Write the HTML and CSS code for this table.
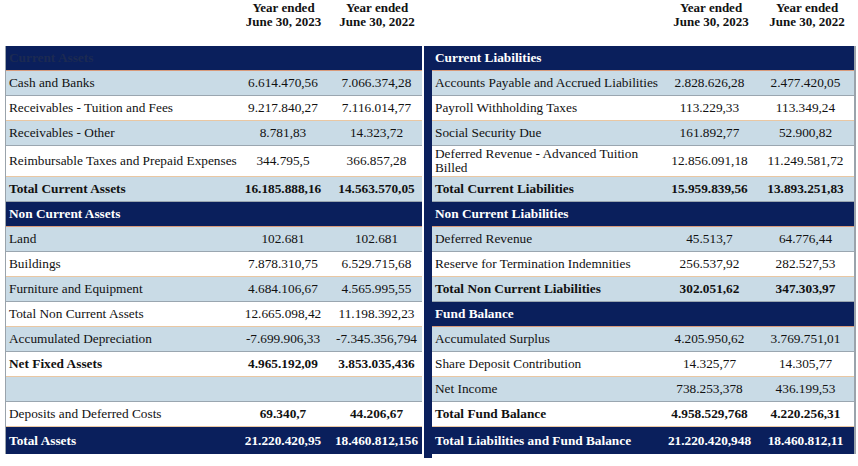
FILE: index.html
```html
<!DOCTYPE html>
<html>
<head>
<meta charset="utf-8">
<link rel="stylesheet" href="styles.css">
</head>
<body>
<div class="page">
  <section class="panel left">
    <div class="head">
      <div></div>
      <div class="yh">Year ended<br>June 30, 2023</div>
      <div class="yh">Year ended<br>June 30, 2022</div>
    </div>
    <div class="tbl">
      <div class="row navy dim"><span class="lbl b">Current Assets</span><span></span><span></span></div>
      <div class="row blue"><span class="lbl">Cash and Banks</span><span>6.614.470,56</span><span>7.066.374,28</span></div>
      <div class="row white"><span class="lbl">Receivables - Tuition and Fees</span><span>9.217.840,27</span><span>7.116.014,77</span></div>
      <div class="row blue"><span class="lbl">Receivables - Other</span><span>8.781,83</span><span>14.323,72</span></div>
      <div class="row white tall"><span class="lbl">Reimbursable Taxes and Prepaid Expenses</span><span>344.795,5</span><span>366.857,28</span></div>
      <div class="row blue b"><span class="lbl">Total Current Assets</span><span>16.185.888,16</span><span>14.563.570,05</span></div>
      <div class="row navy b"><span class="lbl">Non Current Assets</span><span></span><span></span></div>
      <div class="row blue"><span class="lbl">Land</span><span>102.681</span><span>102.681</span></div>
      <div class="row white"><span class="lbl">Buildings</span><span>7.878.310,75</span><span>6.529.715,68</span></div>
      <div class="row blue"><span class="lbl">Furniture and Equipment</span><span>4.684.106,67</span><span>4.565.995,55</span></div>
      <div class="row white"><span class="lbl">Total Non Current Assets</span><span>12.665.098,42</span><span>11.198.392,23</span></div>
      <div class="row blue"><span class="lbl">Accumulated Depreciation</span><span>-7.699.906,33</span><span>-7.345.356,794</span></div>
      <div class="row white b"><span class="lbl">Net Fixed Assets</span><span>4.965.192,09</span><span>3.853.035,436</span></div>
      <div class="row blue"><span class="lbl"></span><span></span><span></span></div>
      <div class="row white"><span class="lbl">Deposits and Deferred Costs</span><span class="b">69.340,7</span><span class="b">44.206,67</span></div>
      <div class="row navy b last"><span class="lbl">Total Assets</span><span>21.220.420,95</span><span>18.460.812,156</span></div>
    </div>
  </section>
  <div class="bar"></div>
  <section class="panel right">
    <div class="head">
      <div></div>
      <div class="yh">Year ended<br>June 30, 2023</div>
      <div class="yh">Year ended<br>June 30, 2022</div>
    </div>
    <div class="tbl">
      <div class="row navy b"><span class="lbl">Current Liabilities</span><span></span><span></span></div>
      <div class="row blue"><span class="lbl">Accounts Payable and Accrued Liabilities</span><span>2.828.626,28</span><span>2.477.420,05</span></div>
      <div class="row white"><span class="lbl">Payroll Withholding Taxes</span><span>113.229,33</span><span>113.349,24</span></div>
      <div class="row blue"><span class="lbl">Social Security Due</span><span>161.892,77</span><span>52.900,82</span></div>
      <div class="row white tall"><span class="lbl wrap">Deferred Revenue - Advanced Tuition Billed</span><span>12.856.091,18</span><span>11.249.581,72</span></div>
      <div class="row blue b"><span class="lbl">Total Current Liabilities</span><span>15.959.839,56</span><span>13.893.251,83</span></div>
      <div class="row navy b"><span class="lbl">Non Current Liabilities</span><span></span><span></span></div>
      <div class="row blue"><span class="lbl">Deferred Revenue</span><span>45.513,7</span><span>64.776,44</span></div>
      <div class="row white"><span class="lbl">Reserve for Termination Indemnities</span><span>256.537,92</span><span>282.527,53</span></div>
      <div class="row blue b"><span class="lbl">Total Non Current Liabilities</span><span>302.051,62</span><span>347.303,97</span></div>
      <div class="row navy b"><span class="lbl">Fund Balance</span><span></span><span></span></div>
      <div class="row blue"><span class="lbl">Accumulated Surplus</span><span>4.205.950,62</span><span>3.769.751,01</span></div>
      <div class="row white"><span class="lbl">Share Deposit Contribution</span><span>14.325,77</span><span>14.305,77</span></div>
      <div class="row blue"><span class="lbl">Net Income</span><span>738.253,378</span><span>436.199,53</span></div>
      <div class="row white b"><span class="lbl">Total Fund Balance</span><span>4.958.529,768</span><span>4.220.256,31</span></div>
      <div class="row navy b last"><span class="lbl">Total Liabilities and Fund Balance</span><span>21.220.420,948</span><span>18.460.812,11</span></div>
    </div>
  </section>
</div>
</body>
</html>
```

FILE: styles.css
```css
html, body {
  margin: 0;
  padding: 0;
  background: #ffffff;
}
body {
  font-family: "Liberation Serif", "Times New Roman", serif;
  font-size: 13.3px;
  color: #111111;
}
.page {
  display: flex;
  align-items: flex-start;
  padding-left: 5px;
}
.panel {
  display: flex;
  flex-direction: column;
}
.left {
  width: 417px;
}
.right {
  width: 424px;
}
.left .head,
.left .row {
  display: grid;
  grid-template-columns: 229px 96px 91px;
}
.right .head,
.right .row {
  display: grid;
  grid-template-columns: 230px 95px 97px;
}
.head {
  height: 46px;
  padding-top: 1px;
  box-sizing: border-box;
  font-size: 13px;
}
.yh {
  font-weight: bold;
  text-align: center;
  line-height: 14px;
  padding-left: 3px;
}
.tbl {
  border-left: 1px solid #9aa3ab;
}
.right .tbl {
  border-left: none;
  border-right: 2px solid #9aa3ab;
}
.row {
  height: 25px;
  box-sizing: border-box;
  align-items: center;
  border-bottom: 1px solid #9aa6b0;
  line-height: 14px;
}
.row > span {
  text-align: center;
  white-space: nowrap;
}
.row > .lbl {
  text-align: left;
  padding-left: 3px;
}
.row > .wrap {
  white-space: normal;
  padding-right: 12px;
}
.tall {
  height: 31px;
}
.b {
  font-weight: bold;
}
.blue {
  background: #c9dbe6;
}
.white {
  background: #ffffff;
  border-bottom-color: #e9c7a3;
}
.navy {
  background: #0a1f5c;
  color: #ffffff;
  border-bottom: 1px solid #d89a7a;
  height: 25px;
}
.navy.dim {
  color: #1c2a52;
}
.last {
  height: 27px;
  border-bottom: none;
}
.bar {
  width: 8px;
  margin-top: 46px;
  margin-left: 2px;
  height: 412px;
  background: #0a1f5c;
}
```
